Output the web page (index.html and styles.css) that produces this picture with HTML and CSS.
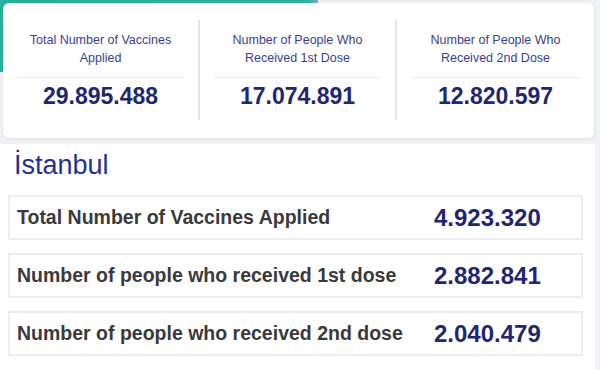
FILE: index.html
```html
<!DOCTYPE html>
<html lang="en">
<head>
<meta charset="utf-8">
<link rel="stylesheet" href="styles.css">
</head>
<body>
  <div class="top">
    <div class="deco"></div>
    <div class="card">
      <div class="col">
        <div class="col-label">Total Number of Vaccines Applied</div>
        <div class="col-value">29.895.488</div>
      </div>
      <div class="col">
        <div class="col-label">Number of People Who Received 1st Dose</div>
        <div class="col-value">17.074.891</div>
      </div>
      <div class="col last">
        <div class="col-label">Number of People Who Received 2nd Dose</div>
        <div class="col-value">12.820.597</div>
      </div>
    </div>
  </div>
  <div class="city">
    <h2 class="city-name">İstanbul</h2>
    <div class="rows">
      <div class="row">
        <div class="row-label">Total Number of Vaccines Applied</div>
        <div class="row-value">4.923.320</div>
      </div>
      <div class="row">
        <div class="row-label">Number of people who received 1st dose</div>
        <div class="row-value">2.882.841</div>
      </div>
      <div class="row">
        <div class="row-label">Number of people who received 2nd dose</div>
        <div class="row-value">2.040.479</div>
      </div>
    </div>
  </div>
</body>
</html>
```

FILE: styles.css
```css
* { box-sizing: border-box; }
html, body { margin: 0; padding: 0; }
body {
  width: 600px;
  height: 370px;
  overflow: hidden;
  background: #f1f2f5;
  font-family: "Liberation Sans", Arial, sans-serif;
}
.top {
  position: relative;
  padding: 3px 6px 6px 3px;
}
.deco {
  position: absolute;
  left: 0;
  top: 0;
  width: 318px;
  height: 72px;
  background: linear-gradient(90deg, #27b29d 0%, #2bb3a0 97%, #7fa9e0 100%);
}
.card {
  position: relative;
  background: #fff;
  border-radius: 6px;
  box-shadow: 0 1px 4px rgba(0, 0, 0, 0.08);
  display: grid;
  grid-template-columns: 1fr 1fr 1fr;
  padding: 17px 0 18px;
}
.col {
  border-right: 2px solid #e4e4e6;
  padding: 11px 14px 10px;
  text-align: center;
}
.col.last { border-right: none; }
.col-label {
  font-size: 12.5px;
  line-height: 18px;
  color: #3a3f8e;
  padding: 0 6px;
  height: 36px;
}
.col-value {
  border-top: 1px solid #ececee;
  margin-top: 10px;
  padding-top: 4px;
  font-size: 23px;
  line-height: 28px;
  font-weight: bold;
  color: #1f2675;
}
.city {
  width: 595px;
  background: #fff;
  padding: 5px 12px 0 8px;
  height: 226px;
}
.city-name {
  margin: 0 0 14px 6px;
  font-weight: normal;
  font-size: 27px;
  line-height: 32px;
  color: #24309a;
}
.rows {
  display: flex;
  flex-direction: column;
  gap: 13px;
}
.row {
  display: grid;
  grid-template-columns: 1fr 147px;
  align-items: center;
  height: 45px;
  border: 2px solid #eeeeee;
  padding-left: 7px;
}
.row-label {
  font-size: 19.5px;
  font-weight: bold;
  color: #3a3a3a;
}
.row-value {
  font-size: 24px;
  font-weight: bold;
  color: #1f2675;
}
```
